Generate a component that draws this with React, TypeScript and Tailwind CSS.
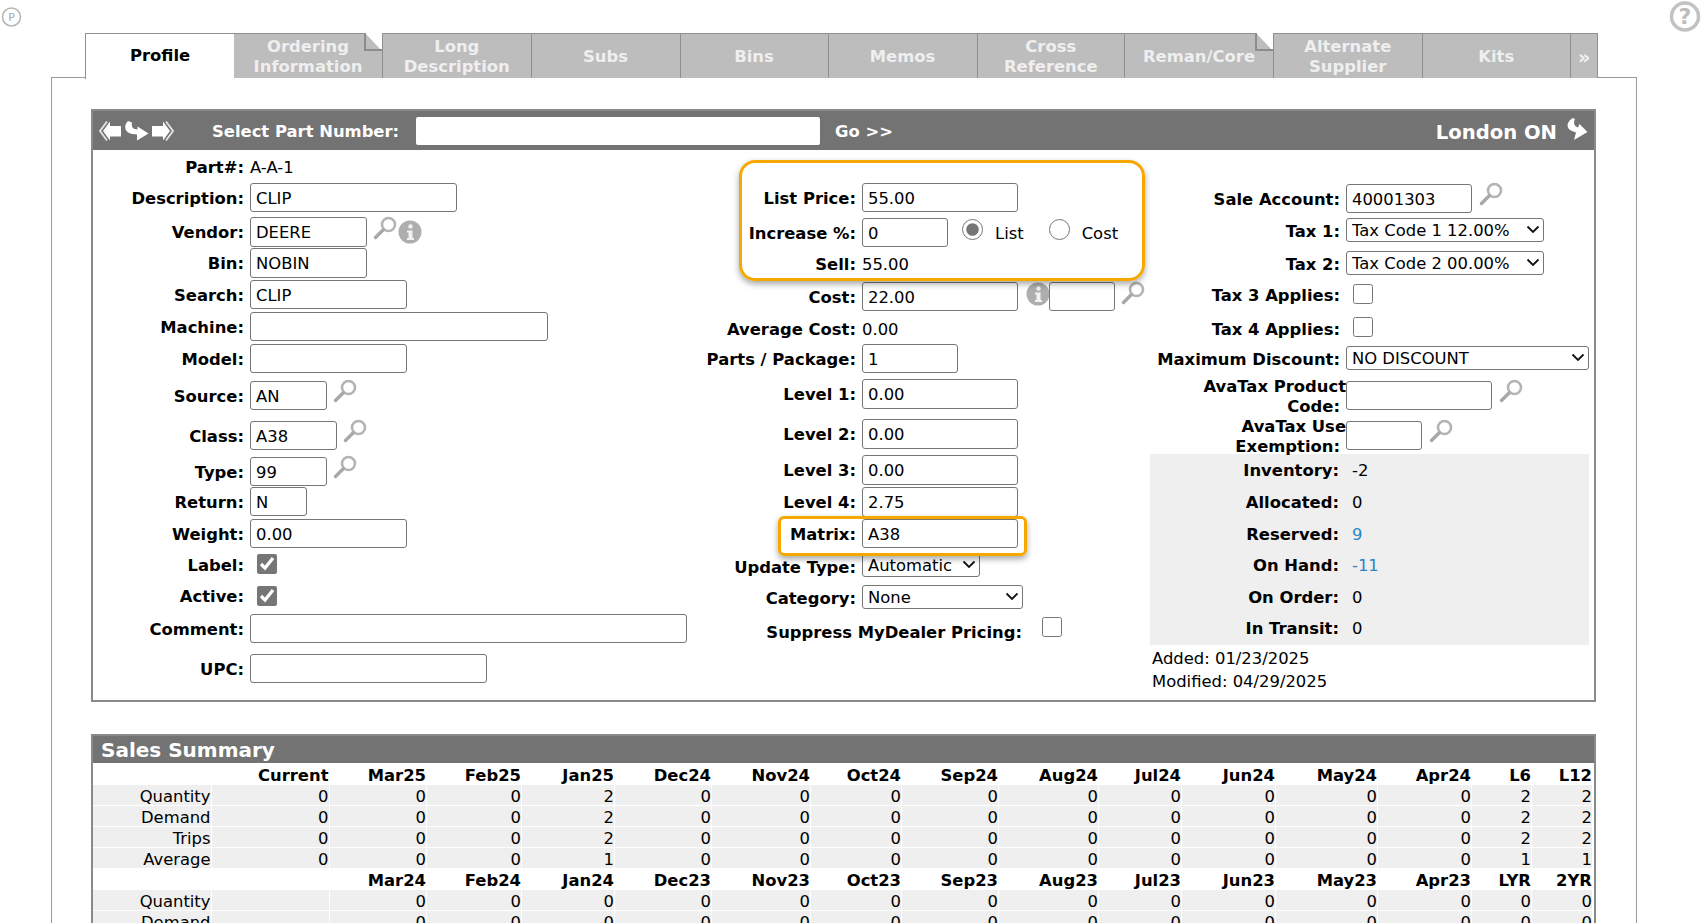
import React from "react";

function Mag({ className = "" }: { className?: string }) {
  return (
    <svg className={className} width="24" height="25" viewBox="0 0 24 25" fill="none">
      <circle cx="15.5" cy="8.5" r="6.5" stroke="#b4b4b4" strokeWidth="2.6" />
      <line x1="10" y1="14" x2="2.5" y2="21.5" stroke="#a8a8a8" strokeWidth="3.4" strokeLinecap="round" />
    </svg>
  );
}

function Info({ className = "" }: { className?: string }) {
  return (
    <svg className={className} width="24" height="24" viewBox="0 0 24 24">
      <circle cx="12" cy="12" r="11.5" fill="#aeaeae" />
      <circle cx="12.5" cy="6.5" r="2.2" fill="#f2f2f2" />
      <path d="M9 10.5h5.5v7.5h1.500v2h-7v-2h1.500v-5.500h-1.500z" fill="#f2f2f2" />
    </svg>
  );
}

function Curl({ className = "" }: { className?: string }) {
  return (
    <svg className={className} width="25" height="20" viewBox="0 0 25 20">
      <path d="M4 0C-1 5 1 12 8 13L13 13.500L13 19.500L24.500 12.500L13.500 5.500L13.500 8.500C9 8.500 7 6 8 1.500Z" fill="#fff" />
    </svg>
  );
}

function CurlUp({ className = "" }: { className?: string }) {
  return (
    <svg className={className} width="24" height="23" viewBox="0 0 24 23">
      <path d="M9 0C3 3 1 10 8 13L12 14.500L10 22L23.500 14L15.500 6L14 9.500C10.500 8.500 9 5 11 1Z" fill="#fff" />
    </svg>
  );
}

function Arrow({ dir }: { dir: "l" | "r" }) {
  return (
    <svg width="22" height="20" viewBox="0 0 22 20" className={dir === "r" ? "-scale-x-100" : ""}>
      <path d="M11 0.500L11 5L22 5L22 15.500L11 15.500L11 19.500L4 10Z" fill="#fff" />
      <path d="M8 0.500L1 10L8 19.500" fill="none" stroke="#e4e4e4" strokeWidth="1.800" />
    </svg>
  );
}

function Fold() {
  return (
    <svg className="absolute right-0 top-[-1px]" width="18" height="19" viewBox="0 0 18 19">
      <path d="M1 0L18 18L18 0Z" fill="#fff" />
      <path d="M1 0L1 17L18 17" fill="none" stroke="#8c8c8c" strokeWidth="2" />
    </svg>
  );
}

function Tab({ a, b, cls, fold }: { a: string; b?: string; cls: string; fold?: boolean }) {
  return (
    <div className={"relative h-[45px] pt-[2px] bg-[#bdbdbd] border-t border-r border-[#8f8f8f] flex flex-col items-center justify-center text-[#efefef] font-bold text-[16.4px] leading-[20px] whitespace-nowrap " + cls}>
      <span>{a}</span>
      {b && <span>{b}</span>}
      {fold && <Fold />}
    </div>
  );
}

function Field({ value = "", cls }: { value?: string; cls: string }) {
  return (
    <input
      readOnly
      value={value}
      className={"h-[29px] pt-[2px] bg-white border border-[#767676] rounded-[3px] px-[5px] text-[16.4px] text-black outline-none font-[DejaVu_Sans,sans-serif] " + cls}
    />
  );
}

function Sel({ value, cls }: { value: string; cls: string }) {
  return (
    <div className={"relative h-[24px] " + cls}>
      <select
        defaultValue={value}
        className="appearance-none w-full h-full bg-white border border-[#767676] rounded-[3px] pl-[5px] text-[16.4px] text-black font-[DejaVu_Sans,sans-serif]"
      >
        <option>{value}</option>
      </select>
      <svg className="absolute right-[4px] top-[7px]" width="14" height="9" viewBox="0 0 14 9" fill="none">
        <path d="M1.500 1.500L7 7L12.500 1.500" stroke="#111" strokeWidth="1.800" />
      </svg>
    </div>
  );
}

function Row({ h, w, label, children }: { h: string; w: string; label?: React.ReactNode; children?: React.ReactNode }) {
  return (
    <div className={"flex items-start " + h}>
      <div className={"h-[29px] pt-[3px] flex items-center justify-end font-bold text-right shrink-0 whitespace-nowrap " + w}>{label}</div>
      <div className="ml-[6px] h-[29px] flex items-center">{children}</div>
    </div>
  );
}

const L = "w-[151px]";
const C = "w-[156px]";
const R = "w-[194px]";

function Check({ checked, cls = "" }: { checked?: boolean; cls?: string }) {
  return (
    <input
      type="checkbox"
      readOnly
      checked={!!checked}
      className={"w-[20px] h-[20px] m-0 accent-[#767676] " + cls}
    />
  );
}

const grid =
  "grid grid-cols-[118.5px_118px_97.5px_95px_93px_97px_99px_91px_97px_100px_83px_94px_102px_94px_60px_61px]";

function HeadRow({ cells }: { cells: string[] }) {
  return (
    <div className={grid + " h-[22px] font-bold leading-[25px]"}>
      {cells.map((c, i) => (
        <div key={i} className="text-right pr-[1px] whitespace-nowrap">{c}</div>
      ))}
    </div>
  );
}

function DataRow({ cells }: { cells: string[] }) {
  return (
    <div className={grid + " h-[20px] mb-[1px] leading-[23px]"}>
      {cells.map((c, i) => (
        <div key={i} className="h-[20px] text-right bg-[#efefef] border-r border-white">{c}</div>
      ))}
    </div>
  );
}

function zeros(label: string, cur: string, jan: string, l6: string, l12: string) {
  return [label, cur, "0", "0", jan, "0", "0", "0", "0", "0", "0", "0", "0", "0", l6, l12];
}

function Stat({ label, value, blue }: { label: string; value: string; blue?: boolean }) {
  return (
    <div className="flex items-center h-[31.6px] pt-[2px]">
      <div className="w-[189px] text-right font-bold">{label}</div>
      <div className={"ml-[13px] " + (blue ? "text-[#2b86c5]" : "")}>{value}</div>
    </div>
  );
}

export default function App() {
  return (
    <div className="relative w-[1705px] h-[923px] overflow-hidden bg-white text-black text-[16.4px] font-[DejaVu_Sans,sans-serif]">
      {/* corner icons */}
      <svg className="absolute left-[1px] top-[7px]" width="21" height="20" viewBox="0 0 21 20">
        <circle cx="10.500" cy="10" r="9" fill="none" stroke="#b5b5b5" strokeWidth="1.500" />
        <text x="10.500" y="14" textAnchor="middle" fontSize="11" fontFamily="DejaVu Sans" fill="#a5a5a5">P</text>
      </svg>
      <svg className="absolute left-[1669px] top-0" width="32" height="33" viewBox="0 0 32 33">
        <circle cx="16" cy="16.500" r="13.500" fill="#fff" stroke="#c2c2c2" strokeWidth="3.500" />
        <text x="16" y="24" textAnchor="middle" fontSize="22" fontWeight="700" fontFamily="DejaVu Sans" fill="#bdbdbd">?</text>
      </svg>

      {/* outer frame */}
      <div className="absolute left-[51px] top-[77px] w-[1586px] h-[900px] border border-[#999999]" />

      {/* tabs */}
      <div className="absolute left-[85px] top-[33px] flex">
        <div className="w-[149px] h-[46px] bg-white border-l border-t border-[#8f8f8f] flex items-center justify-center font-bold">
          Profile
        </div>
        <Tab a="Ordering" b="Information" cls="w-[149px]" fold />
        <Tab a="Long" b="Description" cls="w-[148.500px]" />
        <Tab a="Subs" cls="w-[149px]" />
        <Tab a="Bins" cls="w-[148px]" />
        <Tab a="Memos" cls="w-[149px]" />
        <Tab a="Cross" b="Reference" cls="w-[147.500px]" />
        <Tab a="Reman/Core" cls="w-[149px]" fold />
        <Tab a="Alternate" b="Supplier" cls="w-[148.500px]" />
        <Tab a="Kits" cls="w-[148.500px]" />
        <Tab a="»" cls="w-[26.500px] text-[19px] pl-[1px]" />
      </div>

      {/* profile section */}
      <div className="absolute left-[91px] top-[109px] w-[1505px] h-[593px] border-2 border-[#8a8a8a]">
        <div className="h-[39px] bg-[#737373] flex items-center text-white font-bold">
          <div className="ml-[6px] w-[75px] flex items-center justify-between">
            <Arrow dir="l" />
            <Curl className="-mx-[2px]" />
            <Arrow dir="r" />
          </div>
          <div className="ml-[38px] w-[204px] whitespace-nowrap pt-[3px]">Select Part Number:</div>
          <input readOnly className="w-[404px] h-[28px] bg-white rounded-[2px] outline-none" />
          <div className="ml-[15px] pt-[3px]">Go &gt;&gt;</div>
          <div className="ml-auto text-[19.6px] mt-[5px]">London ON</div>
          <CurlUp className="ml-[7px] mr-[6px] mb-[3px]" />
        </div>

        <div className="flex pt-[2px]">
          {/* left */}
          <div className="w-[607px] shrink-0">
            <Row h="h-[31px]" w={L} label="Part#:"><span className="pt-[3px]">A-A-1</span></Row>
            <Row h="h-[34px]" w={L} label="Description:"><Field value="CLIP" cls="w-[207px]" /></Row>
            <Row h="h-[31px]" w={L} label="Vendor:">
              <Field value="DEERE" cls="w-[117px] h-[30px]" />
              <Mag className="ml-[6px] -mt-[6px]" />
              <Info className="ml-[1px]" />
            </Row>
            <Row h="h-[32px]" w={L} label="Bin:"><Field value="NOBIN" cls="w-[117px] h-[30px]" /></Row>
            <Row h="h-[32px]" w={L} label="Search:"><Field value="CLIP" cls="w-[157px]" /></Row>
            <Row h="h-[32px]" w={L} label="Machine:"><Field cls="w-[298px]" /></Row>
            <Row h="h-[37px]" w={L} label="Model:"><Field cls="w-[157px]" /></Row>
            <Row h="h-[40px]" w={L} label="Source:">
              <Field value="AN" cls="w-[77px]" />
              <Mag className="ml-[6px] -mt-[8px]" />
            </Row>
            <Row h="h-[36px]" w={L} label="Class:">
              <Field value="A38" cls="w-[87px]" />
              <Mag className="ml-[6px] -mt-[8px]" />
            </Row>
            <Row h="h-[30px]" w={L} label="Type:">
              <Field value="99" cls="w-[77px]" />
              <Mag className="ml-[6px] -mt-[8px]" />
            </Row>
            <Row h="h-[32px]" w={L} label="Return:"><Field value="N" cls="w-[57px]" /></Row>
            <Row h="h-[31px]" w={L} label="Weight:"><Field value="0.00" cls="w-[157px]" /></Row>
            <Row h="h-[31px]" w={L} label="Label:"><Check checked cls="ml-[7px] -mt-[1px]" /></Row>
            <Row h="h-[33px]" w={L} label="Active:"><Check checked cls="ml-[7px]" /></Row>
            <Row h="h-[40px]" w={L} label="Comment:"><Field cls="w-[437px]" /></Row>
            <Row h="h-[30px]" w={L} label="UPC:"><Field cls="w-[237px]" /></Row>
          </div>

          {/* center */}
          <div className="w-[446px] shrink-0">
            <div className="h-[31px]" />
            <Row h="h-[35px]" w={C} label="List Price:"><Field value="55.00" cls="w-[156px]" /></Row>
            <Row h="h-[31px]" w={C} label="Increase %:">
              <Field value="0" cls="w-[86px]" />
              <input type="radio" readOnly checked className="ml-[14px] -mt-[7px] w-[21px] h-[21px] m-0 accent-[#767676]" />
              <span className="ml-[12px] pt-[3px]">List</span>
              <input type="radio" readOnly checked={false} className="ml-[25px] -mt-[7px] w-[21px] h-[21px] m-0" />
              <span className="ml-[12px] pt-[3px]">Cost</span>
            </Row>
            <Row h="h-[33px]" w={C} label="Sell:"><span className="pt-[3px]">55.00</span></Row>
            <Row h="h-[32px]" w={C} label="Cost:">
              <Field value="22.00" cls="w-[156px]" />
              <Info className="ml-[8px] -mt-[6px] -mr-[1px]" />
              <Field cls="w-[66px]" />
              <Mag className="ml-[6px] -mt-[6px]" />
            </Row>
            <Row h="h-[30px]" w={C} label="Average Cost:"><span className="pt-[3px]">0.00</span></Row>
            <Row h="h-[35px]" w={C} label="Parts / Package:"><Field value="1" cls="w-[96px]" /></Row>
            <Row h="h-[40px]" w={C} label="Level 1:"><Field value="0.00" cls="w-[156px] h-[30px]" /></Row>
            <Row h="h-[36px]" w={C} label="Level 2:"><Field value="0.00" cls="w-[156px] h-[30px]" /></Row>
            <Row h="h-[32px]" w={C} label="Level 3:"><Field value="0.00" cls="w-[156px] h-[30px]" /></Row>
            <Row h="h-[32px]" w={C} label="Level 4:"><Field value="2.75" cls="w-[156px] h-[30px]" /></Row>
            <Row h="h-[33px]" w={C} label="Matrix:"><Field value="A38" cls="w-[156px]" /></Row>
            <Row h="h-[31px]" w={C} label="Update Type:"><Sel value="Automatic" cls="w-[118px] -mt-[3px]" /></Row>
            <Row h="h-[35px]" w={C} label="Category:"><Sel value="None" cls="w-[161px] -mt-[2px]" /></Row>
            <div className="flex items-center h-[29px]">
              <div className="w-[322px] pt-[2px] text-right font-bold whitespace-nowrap">Suppress MyDealer Pricing:</div>
              <Check cls="ml-[20px] -mt-[11px]" />
            </div>
          </div>

          {/* right */}
          <div className="w-[445px] shrink-0">
            <div className="h-[32px]" />
            <Row h="h-[32px]" w={R} label="Sale Account:">
              <Field value="40001303" cls="w-[126px]" />
              <Mag className="ml-[7px] -mt-[8px]" />
            </Row>
            <Row h="h-[33px]" w={R} label="Tax 1:"><Sel value="Tax Code 1 12.00%" cls="w-[198px] -mt-[1px]" /></Row>
            <Row h="h-[31px]" w={R} label="Tax 2:"><Sel value="Tax Code 2 00.00%" cls="w-[198px] -mt-[1px]" /></Row>
            <Row h="h-[34px]" w={R} label="Tax 3 Applies:"><Check cls="ml-[7px] -mt-[1px]" /></Row>
            <Row h="h-[30px]" w={R} label="Tax 4 Applies:"><Check cls="ml-[7px] -mt-[3px]" /></Row>
            <Row h="h-[37px]" w={R} label="Maximum Discount:"><Sel value="NO DISCOUNT" cls="w-[243px] -mt-[1px]" /></Row>
            <Row
              h="h-[40px]"
              w={R}
              label={
                <div className="leading-[20px] whitespace-nowrap">
                  <span className="block -mr-[6px]">AvaTax Product</span>
                  <span className="block">Code:</span>
                </div>
              }
            >
              <Field cls="w-[146px]" />
              <Mag className="ml-[7px] -mt-[8px]" />
            </Row>
            <Row
              h="h-[33px]"
              w={R}
              label={
                <div className="leading-[20px] whitespace-nowrap">
                  <span className="block -mr-[6px]">AvaTax Use</span>
                  <span className="block">Exemption:</span>
                </div>
              }
            >
              <Field cls="w-[76px]" />
              <Mag className="ml-[7px] -mt-[8px]" />
            </Row>
            <div className="ml-[4px] w-[439px] h-[191px] bg-[#efefef] pt-[1px]">
              <Stat label="Inventory:" value="-2" />
              <Stat label="Allocated:" value="0" />
              <Stat label="Reserved:" value="9" blue />
              <Stat label="On Hand:" value="-11" blue />
              <Stat label="On Order:" value="0" />
              <Stat label="In Transit:" value="0" />
            </div>
            <div className="ml-[6px] pt-[2px] leading-[23px]">
              <div>Added: 01/23/2025</div>
              <div>Modified: 04/29/2025</div>
            </div>
          </div>
        </div>
      </div>

      {/* highlights */}
      <div className="absolute left-[739px] top-[160px] w-[406px] h-[121px] border-[3px] border-[#f6a800] rounded-[16px] shadow-[0_3px_6px_rgba(0,0,0,0.35)]" />
      <div className="absolute left-[778px] top-[516px] w-[249px] h-[40px] border-[3px] border-[#f6a800] rounded-[6px] shadow-[0_3px_6px_rgba(0,0,0,0.35)]" />

      {/* sales summary */}
      <div className="absolute left-[91px] top-[734px] w-[1505px] h-[300px] border-2 border-[#8a8a8a]">
        <div className="h-[27px] bg-[#737373] text-white font-bold text-[20px] leading-[28px] pl-[8px]">Sales Summary</div>
        <HeadRow cells={["", "Current", "Mar25", "Feb25", "Jan25", "Dec24", "Nov24", "Oct24", "Sep24", "Aug24", "Jul24", "Jun24", "May24", "Apr24", "L6", "L12"]} />
        <DataRow cells={zeros("Quantity", "0", "2", "2", "2")} />
        <DataRow cells={zeros("Demand", "0", "2", "2", "2")} />
        <DataRow cells={zeros("Trips", "0", "2", "2", "2")} />
        <div className="h-[20px]">
          <DataRow cells={zeros("Average", "0", "1", "1", "1")} />
        </div>
        <HeadRow cells={["", "", "Mar24", "Feb24", "Jan24", "Dec23", "Nov23", "Oct23", "Sep23", "Aug23", "Jul23", "Jun23", "May23", "Apr23", "LYR", "2YR"]} />
        <DataRow cells={zeros("Quantity", "", "0", "0", "0")} />
        <DataRow cells={zeros("Demand", "", "0", "0", "0")} />
      </div>
    </div>
  );
}
